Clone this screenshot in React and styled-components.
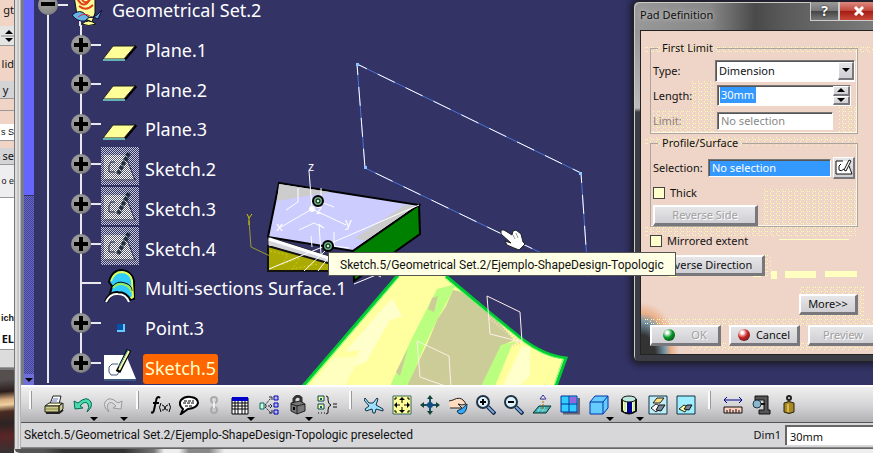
import React, { useState } from 'react';
import styled, { createGlobalStyle, css } from 'styled-components';

const GlobalStyle = createGlobalStyle`
  * { box-sizing: border-box; }
  body {
    margin: 0;
    overflow: hidden;
    font-family: "Noto Sans", "Open Sans", sans-serif;
    font-size: 11px;
    line-height: 16px;
    color: #111;
  }
  button, input, select { font: inherit; color: inherit; }
`;

const Desktop = styled.div`
  position: relative;
  display: flex;
  min-height: 100vh;
  overflow: hidden;
  background: #e9e9e9;
`;

/* ---------- window that peeks out on the left ---------- */

const BackWindow = styled.aside`
  display: flex;
  flex-direction: column;
  flex: 0 0 14px;
  overflow: hidden;
  background: #f0d5c6;
`;

const BackText = styled.div`
  display: flex;
  align-items: center;
  justify-content: flex-end;
  height: ${p => p.$h}px;
  flex: none;
  white-space: nowrap;
  background: ${p => p.$bg || 'transparent'};
  border-bottom: ${p => (p.$line ? '1px solid #999' : 'none')};
  font-weight: ${p => (p.$bold ? 700 : 400)};
  ${p => p.$small && css`
    font-family: "Liberation Sans", sans-serif;
    font-size: 9px;
  `}
`;

const Photo = styled.div`
  flex: 1;
  border-top: 2px solid #777;
  background: linear-gradient(175deg, #55504e 0 10px, #2c1d1c 22px, #d8ad80 30px, #f0d0a0 35px, #4a2a22 42px, #2b2424 54px, #5b2526 66px, #333 84px);
`;

/* ---------- main window ---------- */

const AppWindow = styled.main`
  display: flex;
  flex-direction: column;
  flex: 1;
  min-width: 0;
  padding: 0 0 5px 7px;
  border-bottom-left-radius: 6px;
  background:
    linear-gradient(90deg, #555 0 30px, #333 50px 110px, #777 140px, #eee 150px 165px, #888 175px 195px, #eee 210px) bottom / 100% 4px no-repeat,
    linear-gradient(90deg, #777 0 1px, #ddd 1px 3px, #bbb 4px, #c8c8c8 5px, #fff 6px, #666 7px);
`;

const Workspace = styled.div`
  display: flex;
  flex: 1;
`;

const ScrollTrack = styled.div`
  display: flex;
  flex-direction: column;
  flex: 0 0 13px;
  border-left: 3px solid #777c8c;
  background: repeating-conic-gradient(#6666cc 0 25%, #44448c 0 50%) 0 0 / 2px 2px;
`;

const ScrollThumb = styled.div`
  flex: 0 0 51%;
  background: #6666ff;
  border-bottom: 1px solid #333366;
`;

const ScrollDown = styled.button`
  margin-top: auto;
  height: 11px;
  padding: 0;
  border: 0;
  background: #6f6fdc;
  line-height: 0;
`;

const Viewport = styled.section`
  position: relative;
  display: flex;
  flex: 1;
  min-width: 0;
  overflow: hidden;
  background: #333366;
`;

const SceneSvg = styled.svg`
  position: absolute;
  top: 0;
  left: 0;
`;

/* ---------- specification tree ---------- */

const Tree = styled.ul`
  position: relative;
  display: flex;
  flex-direction: column;
  margin: -15px 0 0;
  padding: 0 0 2px;
  list-style: none;
`;

const TreeRow = styled.li`
  display: flex;
  align-items: center;
  flex: 1 1 0;
  min-height: 0;
`;

const guide = css`
  background: linear-gradient(#e8e8ee, #e8e8ee) ${p => (p.$half === 'bottom' ? 'bottom' : 'top')} / 2px ${p => (p.$half ? '50%' : '100%')} no-repeat;
`;

const Rail = styled.span`
  display: flex;
  align-items: center;
  justify-content: center;
  align-self: stretch;
  width: ${p => (p.$inner ? 39 : 27)}px;
  ${guide}
`;

const Stub = styled.span`
  width: ${p => (p.$long ? 20 : 10)}px;
  margin-left: -${p => (p.$long ? 19 : 9)}px;
  height: 2px;
  background: #e8e8ee;
`;

const RootStub = styled(Stub)`
  width: 10px;
  margin: 0 0 0 -3px;
`;

const Toggle = styled.button`
  display: flex;
  width: 20px;
  height: 20px;
  padding: 0;
  border: 0;
  border-radius: 50%;
  background: radial-gradient(circle at 40% 35%, #a5a5a5, #8a8a8a 60%, #666);
`;

const TreeIcon = styled.svg`
  flex: none;
  margin-top: 4px;
`;

const TreeLabel = styled.span`
  height: 30px;
  margin: 12px 0 0 4px;
  padding: 0 2px;
  border-radius: 3px;
  font-size: 18px;
  line-height: 29px;
  white-space: nowrap;
  color: ${p => (p.$active ? '#ffffcc' : '#fff')};
  background: ${p => (p.$active ? '#ff6600' : 'transparent')};
`;

/* ---------- toolbar and status bar ---------- */

const ToolBar = styled.div`
  display: flex;
  align-items: center;
  height: 38px;
  border-top: 2px solid #fff;
  border-bottom: 1px solid #555;
  background: linear-gradient(#f0f0f0, #d6d6d8 50%, #b2b2b4);
`;

const Divider = styled.span`
  align-self: flex-start;
  flex: none;
  width: 3px;
  height: 18px;
  margin: 4px 8px 0;
  border: solid #999;
  border-width: 0 1px 0 0;
  background: #fafafa;
`;

const Tool = styled.button`
  position: relative;
  display: flex;
  flex: none;
  align-items: center;
  justify-content: center;
  width: ${p => (p.$narrow ? 22 : p.$menu ? 30 : 28)}px;
  height: 32px;
  padding: 0;
  border: 0;
  background: none;
`;

const MenuArrow = styled.span`
  position: absolute;
  right: 0;
  bottom: 0;
  border: 4px solid transparent;
  border-top-color: #000;
  border-bottom: 0;
`;

const StatusBar = styled.footer`
  display: flex;
  align-items: center;
  height: 25px;
  padding-left: 3px;
  border-bottom: 1px solid #888;
  background: #d7d7d9;
`;

const StatusText = styled.span`
  flex: 1;
  font-family: Roboto, sans-serif;
  font-size: 12px;
  white-space: nowrap;
`;

const DimInput = styled.input`
  width: 88px;
  height: 20px;
  margin-left: 4px;
  padding: 0 3px;
  border: solid #666;
  border-width: 2px 0 0 2px;
  background: #fff;
`;

/* ---------- dialog ---------- */

const Dialog = styled.form`
  position: absolute;
  top: 1px;
  right: -14px;
  width: 254px;
  padding: 0 7px 6px 6px;
  border: 1px solid #222;
  border-radius: 6px;
  background:
    linear-gradient(90deg, #999, #888 30%, #4a4a4a 48%, #5a5a5a 60%, #808080) top / 100% 28px no-repeat,
    linear-gradient(#888 0, #bbb 106px, #3c3c44 110px);
  box-shadow: 0 0 6px 3px #111a, inset 1px 1px 0 #ccc;
`;

const TitleBar = styled.header`
  display: flex;
  align-items: flex-start;
  height: 28px;
`;

const Title = styled.h1`
  flex: 1;
  margin: 5px 0 0;
  font-size: 11px;
  font-weight: 400;
  line-height: 16px;
  text-shadow: 0 0 5px #ddd;
`;

const CaptionButton = styled.button`
  width: ${p => (p.$close ? 40 : 29)}px;
  height: 19px;
  padding: 0;
  border: 1px solid #ccc;
  border-top: 0;
  color: #fff;
  font-size: 14px;
  font-weight: 700;
  line-height: 16px;
  text-shadow: 0 0 2px #000;
  background: ${p => (p.$close ? 'linear-gradient(#dd8a80, #c04438 50%, #a41a14 50%, #c84838)' : 'linear-gradient(#999, #777 50%, #444 50%, #777)')};
`;

const DialogBody = styled.div`
  position: relative;
  display: flex;
  flex-direction: column;
  align-items: flex-start;
  padding: 9px 0 8px 9px;
  border: 1px solid #222;
  background: radial-gradient(ellipse at 0 100%, #333 0 14px, #7896a8 24px, #eab08a 30px, transparent 38px), #efd5c8;
`;

const Speckles = styled.svg`
  position: absolute;
  top: 0;
  left: 0;
`;

const Group = styled.fieldset`
  position: relative;
  align-self: stretch;
  min-width: 0;
  margin: 0 20px 1px 0;
  padding: ${p => p.$pad || 2}px 2px 0;
  border: 1px solid #aaa69e;
  box-shadow: inset -1px -1px 0 #fff8e8;
`;

const Legend = styled.legend`
  margin-left: 5px;
  padding: 0 4px;
`;

const Field = styled.div`
  display: flex;
  align-items: center;
  height: 25px;
  color: ${p => (p.$off ? '#8b8078' : 'inherit')};
`;

const FieldLabel = styled.label`
  flex: none;
  width: ${p => p.$w || 64}px;
  white-space: nowrap;
`;

const sunken = css`
  border: 1px solid #fff;
  border-top-color: #777;
  border-left-color: #777;
  box-shadow: inset 1px 1px 0 #555;
`;

const TypeSelect = styled.select`
  flex: 1;
  height: 22px;
  padding: 0 3px;
  border-radius: 0;
  ${sunken}
  appearance: none;
  background: #fff;
`;

const SelectWrap = styled.span`
  position: relative;
  display: flex;
  flex: 1;
  margin-left: -2px;
`;

const raised = css`
  border: 1px solid #fff;
  border-right: 2px solid #77777c;
  border-bottom: 2px solid #77777c;
  background: linear-gradient(#e6e6e8, #cfcfd4);
`;

const SelectArrow = styled.span`
  position: absolute;
  top: 2px;
  right: 1px;
  display: flex;
  align-items: center;
  justify-content: center;
  width: 16px;
  height: 18px;
  ${raised}
  pointer-events: none;
`;

const TextInput = styled.input`
  flex: 1;
  min-width: 0;
  height: ${p => p.$h || 20}px;
  margin-right: ${p => p.$mr || 0}px;
  padding: 0 3px;
  ${sunken}
  background: ${p => (p.$picked ? '#3399ff' : '#fff')};
  color: ${p => (p.$picked ? '#fff' : 'inherit')};
  &:disabled { color: #888; }
`;

const LengthBox = styled.span`
  display: flex;
  flex: 1;
  min-width: 0;
  height: 21px;
  margin-right: 4px;
  ${sunken}
  background: #fff;
`;

const LengthInput = styled.input`
  flex: none;
  width: 36px;
  height: 16px;
  margin: 1px auto 0 2px;
  padding: 0 1px;
  border: 0;
  background: #3399ff;
  color: #fff;
`;

const Spinner = styled.span`
  display: flex;
  flex-direction: column;
  width: 17px;
`;

const Spin = styled.button`
  display: flex;
  flex: 1;
  align-items: center;
  justify-content: center;
  min-height: 0;
  padding: 0;
  ${raised}
`;

const PickButton = styled.button`
  width: 22px;
  height: 22px;
  margin-left: 2px;
  padding: 0;
  ${raised}
`;

const CheckRow = styled.label`
  position: relative;
  display: flex;
  align-items: center;
  gap: 5px;
  height: 25px;
`;

const CheckBox = styled.input`
  appearance: none;
  width: 12px;
  height: 12px;
  margin: 0;
  border: 1px solid #444;
  background: #ffffcc;
  &:checked { background: #333; }
`;

const PushButton = styled.button`
  position: relative;
  display: flex;
  flex: none;
  align-items: center;
  justify-content: center;
  width: ${p => p.$w}px;
  height: 21px;
  padding: 0;
  ${raised}
  border-width: 2px 3px 3px 2px;
  white-space: nowrap;
  &:disabled { color: #a0a0a0; text-shadow: 1px 1px 0 #fff; }
`;

const WideButton = styled(PushButton)`
  margin-top: 2px;
`;

const MoreButton = styled(PushButton)`
  align-self: flex-end;
  margin: 18px 20px 0 0;
`;

const Actions = styled.div`
  display: flex;
  gap: 8px;
  margin-top: 10px;
`;

const Lamp = styled.span`
  width: 12px;
  height: 12px;
  margin-right: ${p => p.$gap}px;
  border-radius: 50%;
  background: radial-gradient(circle at 35% 30%, #fff 0 10%, ${p => p.$c} 45%, #222);
`;

const ToolTip = styled.div`
  position: absolute;
  top: 252px;
  left: 328px;
  min-width: 344px;
  height: 24px;
  padding: 0 11px;
  border: 1px solid #555;
  background: #ffffe6;
  font-family: Roboto, sans-serif;
  font-size: 12px;
  line-height: 24px;
  white-space: nowrap;
`;

/* ---------- tree icons ---------- */

function PlaneIcon() {
  return (
    <TreeIcon width='38' height='38' viewBox='0 0 38 38'>
      <path d='M24 31L35 18' stroke='#000' strokeWidth='3' />
      <path d='M2 31L12 18H34L23 31Z' fill='#ffff99' stroke='#222' />
      <path d='M2 32H24' stroke='#66b2b2' strokeWidth='2' />
    </TreeIcon>
  );
}

function SketchIcon({ hidden }) {
  if (hidden) {
    return (
      <TreeIcon width='38' height='38' viewBox='0 0 38 38'>
        <defs>
          <pattern id='dither' width='2' height='2' patternUnits='userSpaceOnUse'>
            <rect width='1' height='1' fill='#c4c8d8' />
            <rect x='1' y='1' width='1' height='1' fill='#c4c8d8' />
          </pattern>
          <pattern id='ditherLight' width='2' height='2' patternUnits='userSpaceOnUse'>
            <rect width='2' height='2' fill='#5c5c74' />
            <rect width='1' height='1' fill='#fff' />
            <rect x='1' y='1' width='1' height='1' fill='#fff' />
          </pattern>
        </defs>
        <rect width='38' height='38' fill='url(#dither)' />
        <path d='M3 8H24L35 34H3Z' fill='url(#ditherLight)' />
        <path d='M17 27L28 6' stroke='#20303c' strokeWidth='4' strokeDasharray='4 1' />
        <path d='M14 15H10L8 19V25H14M25 10L34 33M3 33H35' fill='none' stroke='#272b48' />
      </TreeIcon>
    );
  }
  return (
    <TreeIcon width='38' height='38' viewBox='0 0 38 38'>
      <path d='M3 9H25L35 33H3Z' fill='#fff' />
      <path d='M3 34H35' stroke='#4d7a99' />
      <path d='M17 18H11L8 21V26L10 29H16L20 23' fill='none' stroke='#457' />
      <path d='M17 26L28 4' stroke='#000' strokeWidth='5' />
      <path d='M18 24L28 5' stroke='#ffffaa' strokeWidth='2' />
      <path d='M18 21L27 4' stroke='#6bb' />
    </TreeIcon>
  );
}

function GeoSetIcon() {
  return (
    <TreeIcon width='38' height='38' viewBox='0 0 38 38'>
      <path d='M12 30V38' stroke='#e8e8ee' strokeWidth='2' />
      <path d='M6 8H27V25L24 34L9 27Z' fill='#ffff99' stroke='#111' />
      <path d='M9 10Q16 24 24 8M11 18Q18 24 25 17M14 12Q18 17 22 11' fill='none' stroke='#e04020' strokeWidth='2' />
      <path d='M4 27Q12 20 18 27T34 22L30 31Q22 26 17 33Q9 34 4 27' fill='#66b2e6' stroke='#113' />
      <path d='M10 29Q16 24 22 28' fill='none' stroke='#c33' />
      <path d='M14 36Q20 30 28 36Q20 39 14 36' fill='#ffff99' stroke='#111' />
    </TreeIcon>
  );
}

function SurfaceIcon() {
  return (
    <TreeIcon width='38' height='38' viewBox='0 0 38 38'>
      <path d='M8 16Q11 4 21 4Q31 5 33 15V33L26 34L9 28L11 20Z' fill='#33ccff' stroke='#000' strokeWidth='2' />
      <path d='M10 15Q13 6 21 6Q30 7 31 15L32 31L28 33' fill='none' stroke='#ddff55' strokeWidth='2' />
      <path d='M11 21Q16 14 24 17Q31 19 31 25' fill='none' stroke='#000' strokeWidth='1' />
      <path d='M12 22Q17 16 24 19Q30 21 30 26' fill='none' stroke='#99ee55' strokeWidth='2' />
      <path d='M5 36Q9 26 17 27Q25 27 29 35L28 38H5Z' fill='#333366' />
      <path d='M5 36Q9 26 17 27Q25 27 29 35' fill='none' stroke='#000' strokeWidth='4' />
      <path d='M5 36Q9 27 17 28Q25 28 28 36' fill='none' stroke='#fff' strokeWidth='2' />
    </TreeIcon>
  );
}

function PointIcon() {
  return (
    <TreeIcon width='38' height='38' viewBox='0 0 38 38'>
      <rect x='16' y='18' width='8' height='8' fill='#66ccff' />
      <rect x='16' y='18' width='6' height='6' fill='#0055aa' />
    </TreeIcon>
  );
}

const treeItems = [
  { name: 'Plane.1', icon: <PlaneIcon /> },
  { name: 'Plane.2', icon: <PlaneIcon /> },
  { name: 'Plane.3', icon: <PlaneIcon /> },
  { name: 'Sketch.2', icon: <SketchIcon hidden /> },
  { name: 'Sketch.3', icon: <SketchIcon hidden /> },
  { name: 'Sketch.4', icon: <SketchIcon hidden /> },
  { name: 'Multi-sections Surface.1', icon: <SurfaceIcon />, leaf: true },
  { name: 'Point.3', icon: <PointIcon /> },
  { name: 'Sketch.5', icon: <SketchIcon />, active: true },
];

function ToggleMark({ open }) {
  return (
    <svg width='20' height='20' viewBox='0 0 20 20'>
      <path d={open ? 'M3 9H17' : 'M3 10H17M10 3V17'} stroke='#000' strokeWidth='4' />
    </svg>
  );
}

function SpecTree() {
  return (
    <Tree>
      <TreeRow>
        <Rail $half='bottom'>
          <Toggle type='button' aria-label='Collapse Geometrical Set.2'><ToggleMark open /></Toggle>
        </Rail>
        <RootStub />
        <GeoSetIcon />
        <TreeLabel>Geometrical Set.2</TreeLabel>
      </TreeRow>
      {treeItems.map((item, i) => (
        <TreeRow key={item.name}>
          <Rail />
          <Rail $inner $half={i === treeItems.length - 1 ? 'top' : undefined}>
            {!item.leaf && <Toggle type='button' aria-label={`Expand ${item.name}`}><ToggleMark /></Toggle>}
          </Rail>
          <Stub $long={item.leaf} />
          {item.icon}
          <TreeLabel $active={item.active}>{item.name}</TreeLabel>
        </TreeRow>
      ))}
    </Tree>
  );
}

/* ---------- 3D view ---------- */

function Scene() {
  return (
    <SceneSvg width='840' height='386' viewBox='34 0 840 386' fontSize='13' fill='none'>
      {/* preselected sketch */}
      <path d='M357 64L581 173L588 276M357 64L365 168L589 276' stroke='#4a74d8' />
      <path d='M357 64L581 173L588 276M357 64L365 168L589 276' stroke='#fff' strokeDasharray='19 12' strokeDashoffset='8' />
      <path d='M356 63h3v3h-3zM364 166h3v3h-3zM579 172h3v3h-3z' fill='#8ac4ff' />

      {/* multi-section surface */}
      <path d='M398 275L303 386H556L566 358Q545 356 522 339L490 313L446 276Z' fill='#ffffa0' />
      <path d='M392 298L345 352L360 350L350 368L366 362L390 320L402 316Z' fill='#ffffcc' />
      <path d='M334 358L310 386H345L360 356Z' fill='#ffffc0' />
      <path d='M437 289L456 284L448 300L436 322L425 345L408 386H390L412 338Z' fill='#bbff80' />
      <path d='M432 298L438 296L434 312L428 309ZM408 348L400 376L396 372Z' fill='#cccc99' />
      <path d='M453 290Q470 292 490 312L514 340L501 346L485 386H407L428 342L437 320L446 306Z' fill='#cccc99' />
      <path d='M501 345L516 341L498 386H481Z' fill='#bbff80' />
      <path d='M512 345L522 341L500 386H495Z' fill='#ffff99' />
      <path d='M522 346L530 348V376L519 386H503Z' fill='#ffffcc' />
      <path d='M490 318L520 342L510 346' stroke='#f0d8b0' strokeWidth='4' strokeDasharray='1 2' />
      <path d='M398 275L303 386M446 276L490 313L522 339Q545 356 566 358L556 386' stroke='#00cc33' strokeWidth='3' />
      <path d='M399 277L306 386M445 278L489 314L521 340Q544 357 563 359L554 386' stroke='#66ff66' strokeWidth='1' />
      <path d='M487 296L520 312L522 342L490 334ZM417 341L449 356L451 388L420 377Z' stroke='#ffeee6' />

      {/* wedge solid */}
      <path d='M279 183L419 205L353 251L268 237Z' fill='#ccccff' stroke='#000' strokeWidth='2' />
      <path d='M279 184L330 192L300 197L277 201ZM405 205L416 206L365 241L355 238Z' fill='#ccc' />
      <path d='M419 205L420 234L354 281L353 251Z' fill='#008000' stroke='#000' strokeWidth='2' />
      <path d='M268 237L335 258L335 265L268 246Z' fill='#d4d4dc' stroke='#222' />
      <path d='M269 239L335 260' stroke='#fff' strokeWidth='3' />
      <path d='M268 246L335 265V271H268Z' fill='#aaaa00' />
      <path d='M268 245V271H335M268 246L335 265' stroke='#111' strokeWidth='2' />
      <path d='M270 251L288 255L281 265L300 258L292 269L318 264' stroke='#cccc22' strokeDasharray='2 2' />
      <path d='M269 269L320 248L419 205M304 271L326 250M318 271L331 254M354 284L376 275L371 272L381 277' stroke='#fff' />
      <path d='M309 171L312 209L346 225M312 209L281 227M298 188L298 202L286 210M321 188L321 202L334 207M299 230L314 223L324 228L319 224L321 254M311 236L312 247M334 232L334 246L349 248' stroke='#fff' />
      <circle cx='312' cy='209' r='3' fill='#fff' />
      <text x='308' y='171' fill='#fff'>z</text>
      <text x='276' y='231' fill='#fff'>x</text>
      <text x='345' y='227' fill='#fff'>y</text>
      <text x='316' y='214' fill='#fff'>z</text>
      {[[318, 201], [328, 246]].map(([x, y]) => (
        <g key={y} stroke='#000'>
          <circle cx={x} cy={y} r='5' fill='#67a982' strokeWidth='2' />
          <circle cx={x} cy={y} r='2' fill='#bbffcc' />
        </g>
      ))}
      <path d='M249 221L251 247L270 256' stroke='#999933' />
      <path d='M247 214L249 218L252 214M249 218V225' stroke='#cccc00' />

      {/* hand cursor */}
      <path d='M501 230L504 230L512 235L513 231L516 230L521 234L523 242L525 244L519 250L514 248L507 245L505 241L511 243L501 234Z' fill='#fff' stroke='#222' />
      <path d='M513 235L515 239M516 233L518 238' stroke='#999' />
    </SceneSvg>
  );
}

/* ---------- toolbar icons, all on a 20px grid ---------- */

const icons = {
  Print: (
    <g stroke='#222'>
      <path d='M6 9L9 1H17L15 9Z' fill='#fff' />
      <path d='M9 4H14M8 6H13' stroke='#67b' />
      <path d='M1 11L5 8H18L15 11Z' fill='#ffffcc' />
      <path d='M1 11H15V17H1ZM15 11L19 8V14L15 18Z' fill='#cccc88' />
      <path d='M2 14H14' stroke='#884' /><path d='M2 18H15L19 15' strokeWidth='2' />
    </g>
  ),
  Undo: <path d='M1 6L2 14L10 13L7 11Q12 5 15 9Q17 12 14 17Q20 12 18 7Q14 0 5 8Z' fill='#44ddaa' stroke='#0a6655' />,
  Redo: <path d='M19 6L18 14L10 13L13 11Q8 5 5 9Q3 12 6 17Q0 12 2 7Q6 0 15 8Z' fill='#ddd' stroke='#999' />,
  Formula: (
    <>
      <path d='M9 3Q6 0 5 6L3 15Q2 19 0 17M2 8H8' stroke='#000' strokeWidth='2' />
      <path d='M10 8Q7 12 10 17M18 8Q21 12 18 17M11 10Q13 10 14 13T17 15M17 10Q15 10 14 13T11 15' stroke='#000' />
    </>
  ),
  Comment: (
    <>
      <path d='M4 14Q-1 10 2 5Q6 1 12 2Q19 3 19 8Q18 13 9 14L2 19Z' fill='#fff' stroke='#000' strokeWidth='2' />
      <path d='M5 6H15M4 8H16M6 11H14' stroke='#000' strokeDasharray='3 1' />
    </>
  ),
  Link: <><circle cx='10' cy='5' r='3' stroke='#aaa' strokeWidth='2' /><circle cx='10' cy='15' r='3' stroke='#aaa' strokeWidth='2' /><path d='M10 7V13' stroke='#eee' strokeWidth='2' /></>,
  Table: <><path d='M2 3H18V19H2Z' fill='#fff' stroke='#000' /><path d='M2 8H18M2 11H18M2 14H18M5 6V19M8 6V19M12 6V19M15 6V19' stroke='#000' /><path d='M2 2H18V6H2Z' fill='#0000cc' /></>,
  Relations: (
    <>
      <path d='M1 8H5V14H1Z' fill='#ccffcc' stroke='#067' />
      <path d='M6 10L12 3M6 11H13M6 12L12 18' stroke='#223' strokeDasharray='2 1' />
      <path d='M15 1H19V5H15ZM15 8H19V12H15ZM15 15H19V19H15Z' fill='#bbf' stroke='#0000aa' />
      <path d='M10 2h3v3M11 9l2 2-2 2M10 18h3v-3' stroke='#223' />
    </>
  ),
  Lock: <><path d='M6 9V4Q9 -1 13 3V9' stroke='#333' strokeWidth='3' /><path d='M3 8L12 6L17 9V16L9 19L3 16Z' fill='#777' stroke='#222' /><path d='M9 10V19M3 9L9 11L17 9' stroke='#222' /><path d='M6 12V15' stroke='#000' strokeWidth='2' /></>,
  Equivalent: (
    <>
      <path d='M1 1H7V6H1ZM1 9H7V14H1Z' fill='#ffff99' stroke='#045' />
      <path d='M3 3h2v2h-2zM3 11h2v2h-2z' fill='#067' />
      <path d='M1 18H8' stroke='#000' strokeDasharray='1 2' />
      <path d='M9 1Q12 1 11 5Q11 9 14 10Q11 11 11 15Q12 19 9 19' stroke='#111' />
      <path d='M16 9H20M16 12H20' stroke='#111' />
    </>
  ),
  Fly: <path d='M1 3L5 8L9 8L13 3L14 4L12 10L19 14V16L12 14L11 18L9 18L8 14L2 16L1 14L5 11L0 5Z' fill='#9de0ff' stroke='#134' />,
  'Fit all': <><path d='M1 1H19V19H1Z' fill='#ffff99' stroke='#366' /><path d='M10 3V8M10 12V17M3 10H8M12 10H17' stroke='#000' /><path d='M10 2L13 5H7ZM10 18L13 15H7ZM2 10L5 7V13ZM18 10L15 7V13Z' fill='#000' /><path d='M3 5V3H5M15 3H17V5M3 15V17H5M15 17H17V15' stroke='#000' /></>,
  Pan: <><path d='M10 2V18M2 10H18' stroke='#145070' strokeWidth='2' /><path d='M10 0L13 4H7ZM10 20L13 16H7ZM0 10L4 7V13ZM20 10L16 7V13Z' fill='#143' /><circle cx='10' cy='10' r='3' fill='#134c80' /></>,
  Rotate: <><path d='M1 6L5 5Q12 1 16 6L18 9L14 10L10 9L14 13L8 13L2 13' fill='#ffdcc0' stroke='#222' /><path d='M9 16Q15 14 19 9Q19 18 13 19Q10 19 9 16' fill='#33aaff' stroke='#134' /></>,
  'Zoom in': <><path d='M12 12L19 19' stroke='#124' strokeWidth='4' /><path d='M12 12L18 18' stroke='#7ad' strokeWidth='2' /><circle cx='7' cy='7' r='6' fill='#ddf4ff' stroke='#234' strokeWidth='2' /><path d='M4 7H10M7 4V10' stroke='#000' strokeWidth='2' /></>,
  'Zoom out': <><path d='M12 12L19 19' stroke='#124' strokeWidth='4' /><path d='M12 12L18 18' stroke='#7ad' strokeWidth='2' /><circle cx='7' cy='7' r='6' fill='#ddf4ff' stroke='#234' strokeWidth='2' /><path d='M4 7H10' stroke='#000' strokeWidth='2' /></>,
  'Normal view': <><path d='M1 18L7 11H19L14 18Z' fill='#44aaaa' stroke='#033' /><path d='M5 15H15M8 12L6 17M13 12L10 17' stroke='#7dd' /><path d='M11 14V3' stroke='#a60' strokeDasharray='2 1' /><path d='M11 0L14 4H8Z' fill='#eef' stroke='#339' /></>,
  'Multi view': <><path d='M3 18H19V3' stroke='#667' strokeWidth='3' /><path d='M1 1H17V17H1Z' fill='#33ccff' stroke='#003399' /><path d='M10 2H16V8H10Z' fill='#9966dd' /><path d='M9 1V17M1 9H17' stroke='#003399' /></>,
  'Quick view': <path d='M1 7H14V19H1ZM1 7L6 1H19V13L14 19M14 7L19 1' fill='#66ccff' stroke='#0033aa' />,
  'Render style': <><path d='M3 4V16Q10 21 17 16V4' fill='#ffff99' stroke='#111' strokeWidth='2' /><path d='M8 6H13V18H8Z' fill='#000099' /><path d='M6 6V17M15 6V16' stroke='#cceeaa' strokeWidth='2' /><ellipse cx='10' cy='4' rx='7' ry='3' fill='#bde8dd' stroke='#111' /></>,
  'Hide and show': <><path d='M1 1H19V19H1Z' fill='#bfeef8' stroke='#134' /><path d='M5 8L9 3H16L12 8Z' fill='#ffe080' stroke='#222' /><path d='M3 13L8 9L12 11V14L8 17Z' fill='#fff' stroke='#222' /><path d='M8 15L11 10H17L13 16Z' fill='#789' stroke='#111' /></>,
  'Swap space': <><path d='M1 1H19V19H1Z' fill='#9eeeff' stroke='#134' /><path d='M3 14L8 10L12 12L9 17Z' fill='#ffffaa' stroke='#222' /><path d='M8 14L11 10H16L13 15Z' fill='#789' stroke='#111' /></>,
  Measure: <><path d='M1 5H19M4 2L1 5L4 8M16 2L19 5L16 8' stroke='#000088' strokeWidth='1' /><path d='M1 12H19V18H1Z' fill='#ffd0c0' stroke='#111' /><path d='M4 15V18M7 14V18M10 15V18M13 14V18M16 15V18' stroke='#111' /></>,
  'Measure item': <><path d='M4 1H17V15H19V19H8V15H13V5H4Z' fill='#555' stroke='#111' /><circle cx='6' cy='9' r='4' fill='#88b8cc' stroke='#234' /><path d='M10 9H14' stroke='#111' strokeWidth='2' /></>,
  'Measure inertia': <><circle cx='10' cy='3' r='2' stroke='#222' strokeWidth='2' /><path d='M5 8Q10 5 15 8V17Q10 20 5 17Z' fill='#aa8822' stroke='#221' /><path d='M9 9V17' stroke='#d6b858' strokeWidth='2' /></>,
};

const toolGroups = [
  [{ id: 'Print' }, { id: 'Undo', menu: true }, { id: 'Redo', menu: true }],
  [{ id: 'Formula' }, { id: 'Comment' }, { id: 'Link', narrow: true }, { id: 'Table', menu: true }, { id: 'Relations' }, { id: 'Lock', menu: true }, { id: 'Equivalent' }],
  [{ id: 'Fly' }, { id: 'Fit all' }, { id: 'Pan' }, { id: 'Rotate' }, { id: 'Zoom in' }, { id: 'Zoom out' }, { id: 'Normal view' }, { id: 'Multi view' },
    { id: 'Quick view', menu: true }, { id: 'Render style', menu: true }, { id: 'Hide and show' }, { id: 'Swap space' }],
  [{ id: 'Measure' }, { id: 'Measure item' }, { id: 'Measure inertia' }],
];

function Tools() {
  return (
    <ToolBar role='toolbar'>
      {toolGroups.map((group, i) => (
        <React.Fragment key={i}>
          <Divider />
          {group.map(tool => (
            <Tool key={tool.id} type='button' aria-label={tool.id} $menu={tool.menu} $narrow={tool.narrow}>
              <svg width='20' height='20' viewBox='0 0 20 20' fill='none'>{icons[tool.id]}</svg>
              {tool.menu && <MenuArrow />}
            </Tool>
          ))}
        </React.Fragment>
      ))}
    </ToolBar>
  );
}

function Triangle({ up }) {
  return (
    <svg width='8' height='4' viewBox='0 0 8 4'><path d={up ? 'M0 4L4 0L8 4Z' : 'M0 0L4 4L8 0Z'} fill='#000' /></svg>
  );
}

function PadDialog({ length, setLength }) {
  const [thick, setThick] = useState(false);
  const [mirrored, setMirrored] = useState(false);

  const step = by => setLength(`${(parseFloat(length) || 0) + by}mm`);

  return (
    <Dialog onSubmit={e => e.preventDefault()}>
      <TitleBar>
        <Title>Pad Definition</Title>
        <CaptionButton type='button' aria-label='Help'>?</CaptionButton>
        <CaptionButton type='button' aria-label='Close' $close>
          <svg width='12' height='10' viewBox='0 0 12 10'><path d='M2 1L10 9M10 1L2 9' stroke='#fff' strokeWidth='3' /></svg>
        </CaptionButton>
      </TitleBar>
      <DialogBody>
        <Speckles width='240' height='320' viewBox='0 0 240 320'>
          <defs>
            <pattern id='speck' width='6' height='4' patternUnits='userSpaceOnUse'>
              <path d='M0 0h1v1h-1zM3 2h1v1h-1zM4 0h1v1h-1z' fill='#ffffb0' />
            </pattern>
          </defs>
          <path d='M4 15H236V22H4ZM50 50H75V104H50ZM12 80H75V104H12ZM198 75H216V104H198ZM4 106H216V116H4ZM122 158H216V196H122ZM4 196H216V206H4ZM4 224H130V246H4ZM158 256H224V288H158ZM4 288H236V296H4ZM50 312H230V320H50Z' fill='url(#speck)' />
          <path d='M28 240H36V246H28ZM112 240H120V246H112ZM130 240H136V248H130ZM144 240H175V247H144ZM184 240H216V246H184ZM138 208H208V209H138Z' fill='#ffffc0' />
        </Speckles>

        <Group>
          <Legend>First Limit</Legend>
          <Field>
            <FieldLabel htmlFor='type'>Type:</FieldLabel>
            <SelectWrap>
              <TypeSelect id='type' defaultValue='Dimension'>
                <option>Dimension</option>
                <option>Up to next</option>
                <option>Up to last</option>
              </TypeSelect>
              <SelectArrow><Triangle /></SelectArrow>
            </SelectWrap>
          </Field>
          <Field>
            <FieldLabel htmlFor='length'>Length:</FieldLabel>
            <LengthBox>
              <LengthInput id='length' value={length} onChange={e => setLength(e.target.value)} />
              <Spinner>
                <Spin type='button' aria-label='Increase' onClick={() => step(1)}><Triangle up /></Spin>
                <Spin type='button' aria-label='Decrease' onClick={() => step(-1)}><Triangle /></Spin>
              </Spinner>
            </LengthBox>
          </Field>
          <Field $off>
            <FieldLabel htmlFor='limit'>Limit:</FieldLabel>
            <TextInput id='limit' defaultValue='No selection' disabled $h={18} $mr={22} />
          </Field>
        </Group>

        <Group $pad={4}>
          <Legend>Profile/Surface</Legend>
          <Field>
            <FieldLabel htmlFor='profile' $w={55}>Selection:</FieldLabel>
            <TextInput id='profile' defaultValue='No selection' $h={18} $picked />
            <PickButton type='button' aria-label='Sketcher'>
              <svg width='18' height='18' viewBox='0 0 18 18' fill='none'>
                <path d='M1 3H13L17 16H1Z' fill='#fff' />
                <path d='M1 16V3H8M1 16H17L14 8M6 6Q3 7 4 12Q6 14 9 11' stroke='#111' />
                <path d='M9 12L14 2L16 3L11 13Z' fill='#fff' stroke='#111' />
              </svg>
            </PickButton>
          </Field>
          <CheckRow>
            <CheckBox type='checkbox' checked={thick} onChange={e => setThick(e.target.checked)} />
            Thick
          </CheckRow>
          <PushButton type='button' $w={105} disabled>Reverse Side</PushButton>
        </Group>

        <CheckRow>
          <CheckBox type='checkbox' checked={mirrored} onChange={e => setMirrored(e.target.checked)} />
          Mirrored extent
        </CheckRow>
        <WideButton type='button' $w={115}>Reverse Direction</WideButton>
        <MoreButton type='button' $w={59}>More&gt;&gt;</MoreButton>
        <Actions>
          <PushButton type='submit' $w={71} disabled><Lamp $c='#009922' $gap={16} />OK</PushButton>
          <PushButton type='button' $w={71}><Lamp $c='#cc2222' $gap={6} />Cancel</PushButton>
          <PushButton type='button' $w={71} disabled>Preview</PushButton>
        </Actions>
      </DialogBody>
    </Dialog>
  );
}

export default function App() {
  const [length, setLength] = useState('30mm');

  return (
    <Desktop>
      <GlobalStyle />
      <BackWindow>
        <BackText $h={20}>gt</BackText>
        <BackText $h={6} />
        <BackText $h={20} $bg='#e4e4e4' $line><svg width='13' height='18' viewBox='0 0 13 18'><path d='M4 7L8 3L12 7ZM4 11L8 15L12 11Z' fill='#000' /><path d='M0 9H13' stroke='#888' /></svg></BackText>
        <BackText $h={35}>lid</BackText>
        <BackText $h={18} $bg='#d4d4d6' $line>y&nbsp;&nbsp;</BackText>
        <BackText $h={12} $line />
        <BackText $h={13} />
        <BackText $h={17} $bg='#fff' $line $small>s S</BackText>
        <BackText $h={7} />
        <BackText $h={17} $bg='#d4d4d6' $line>se</BackText>
        <BackText $h={33} $bg='#eeeef0' $line $small>o e</BackText>
        <BackText $h={110} $bg='#fff' />
        <BackText $h={20} $bg='#fff' $bold $small>ich</BackText>
        <BackText $h={22} $bg='#fff' $line $bold>EL</BackText>
        <BackText $h={18} $bg='#dcdcdc' $line />
        <Photo />
      </BackWindow>

      <AppWindow>
        <Workspace>
          <ScrollTrack>
            <ScrollThumb />
            <ScrollDown type='button' aria-label='Scroll down'><Triangle /></ScrollDown>
          </ScrollTrack>
          <Viewport>
            <Scene />
            <SpecTree />
          </Viewport>
        </Workspace>
        <Tools />
        <StatusBar>
          <StatusText>Sketch.5/Geometrical Set.2/Ejemplo-ShapeDesign-Topologic preselected</StatusText>
          <label htmlFor='dim1'>Dim1</label>
          <DimInput id='dim1' value={length} onChange={e => setLength(e.target.value)} />
        </StatusBar>
      </AppWindow>

      <PadDialog length={length} setLength={setLength} />
      <ToolTip role='tooltip'>Sketch.5/Geometrical Set.2/Ejemplo-ShapeDesign-Topologic</ToolTip>
    </Desktop>
  );
}
